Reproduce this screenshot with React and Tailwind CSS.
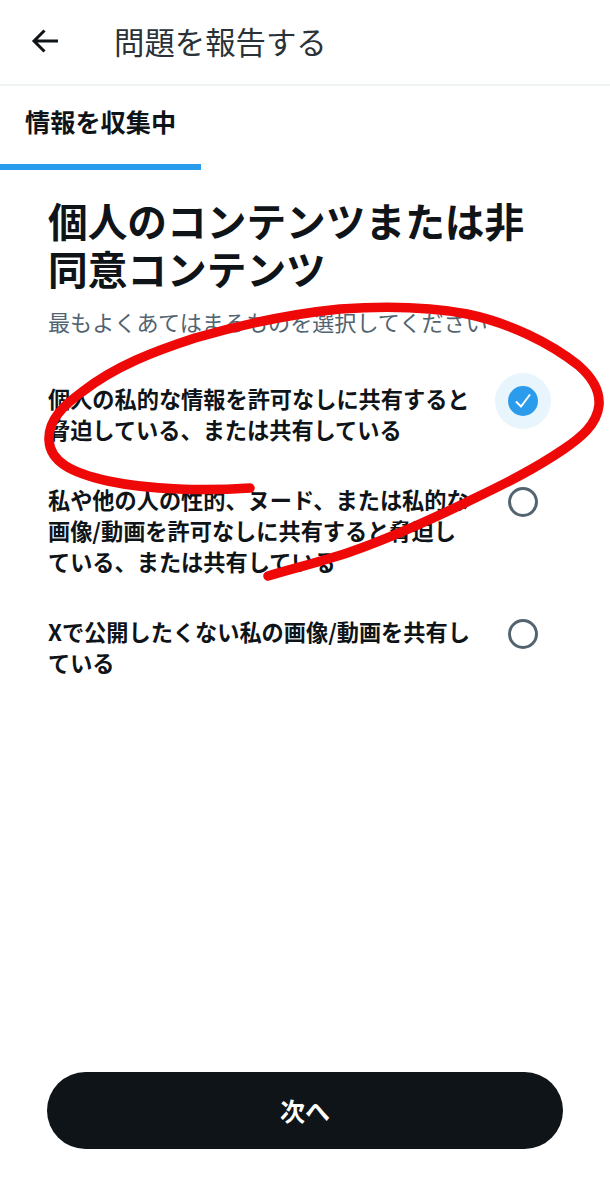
import React from "react";

const font = { fontFamily: '"Noto Sans CJK JP", "Noto Sans", sans-serif' };

function Radio({ checked }) {
  if (checked) {
    return (
      <div className="-mt-[10.5px] flex h-[56px] w-[56px] shrink-0 items-center justify-center rounded-full bg-[#e8f5fd]">
        <div className="flex h-[30px] w-[30px] items-center justify-center rounded-full bg-[#2b9cec]">
          <svg width="20" height="20" viewBox="0 0 20 20" fill="none">
            <path d="M3 10.5 L8 15.5 L17 3.5" stroke="#fff" strokeWidth="2" />
          </svg>
        </div>
      </div>
    );
  }
  return (
    <div className="-mt-[10.5px] flex h-[56px] w-[56px] shrink-0 items-center justify-center">
      <div className="h-[30px] w-[30px] rounded-full border-[3px] border-[#536471]" />
    </div>
  );
}

function Option({ lines, checked }) {
  return (
    <div className="flex items-start justify-between">
      <div className="w-[430px] text-[22.2px] leading-[31px] font-bold text-[#0f1419]">
        {lines.map((l) => (
          <div key={l} className="whitespace-nowrap">{l}</div>
        ))}
      </div>
      <Radio checked={checked} />
    </div>
  );
}

export default function App() {
  return (
    <div className="relative flex h-[1200px] w-[610px] flex-col overflow-hidden bg-white" style={font}>
      <header className="flex h-[86px] shrink-0 items-center border-b-2 border-[#eff3f4] pl-[30px]">
        <svg width="30" height="32" viewBox="0 0 30 32" fill="none" className="mb-[3px]">
          <path d="M28 16 H4 M14.5 5.5 L4 16 L14.5 26.5" stroke="#0f1419" strokeWidth="3" />
        </svg>
        <h1 className="ml-[54px] mb-[2px] text-[30.4px] leading-none font-normal text-[#2a3238]">問題を報告する</h1>
      </header>

      <div className="flex h-[78px] shrink-0 items-center pb-[7px] pl-[25px] text-[25.2px] leading-none font-bold text-[#0f1419]">
        情報を収集中
      </div>
      <div className="h-[6px] w-[201px] shrink-0 bg-[#2b9cec]" />

      <main className="flex flex-1 flex-col px-[48px] pt-[26px]">
        <h2 className="text-[39.7px] leading-[47.5px] font-bold text-[#0f1419]">
          <div className="whitespace-nowrap">個人のコンテンツまたは非</div>
          <div className="whitespace-nowrap">同意コンテンツ</div>
        </h2>
        <p className="mt-[16px] text-[22.1px] leading-[28px] whitespace-nowrap text-[#536471]">
          最もよくあてはまるものを選択してください
        </p>
        <div className="mt-[48px] flex flex-col gap-[39px] pr-[11px]">
          <Option
            checked
            lines={["個人の私的な情報を許可なしに共有すると", "脅迫している、または共有している"]}
          />
          <Option
            lines={["私や他の人の性的、ヌード、または私的な", "画像/動画を許可なしに共有すると脅迫し", "ている、または共有している"]}
          />
          <Option lines={["Xで公開したくない私の画像/動画を共有し", "ている"]} />
        </div>
        <button className="mt-auto mb-[51px] -ml-px flex h-[77px] w-[516px] items-center justify-center rounded-full bg-[#0f1419] text-[25px] font-bold text-white">
          次へ
        </button>
      </main>

      <svg className="pointer-events-none absolute inset-0" width="610" height="1200" viewBox="0 0 610 1200" fill="none">
        <path
          d="M250 488 C205 491 150 490 108 481 C72 473 50 462 49 440 C48 420 64 405 82 392 C115 366 155 351 195 338 C240 325 290 314 340 309 C385 306 430 307 467 314 C510 323 550 343 578 365 C592 377 600 390 599 405 C597 425 580 438 564 449 C530 472 500 486 467 502 C430 520 390 538 350 552 C320 562 295 568 268 576"
          stroke="#ee0808"
          strokeWidth="9.5"
          strokeLinecap="round"
          strokeLinejoin="round"
        />
      </svg>
    </div>
  );
}
